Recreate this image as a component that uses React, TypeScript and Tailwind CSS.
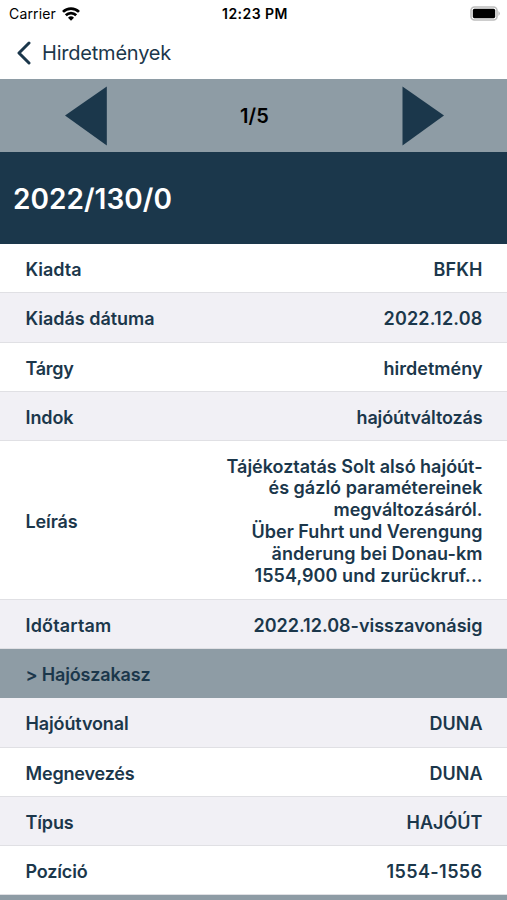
import React from "react";

type RowData = { label: string; value: string; h: string; bg: string; lw: number; vw: number };

const rows: RowData[] = [
  { label: "Kiadta", value: "BFKH", h: "h-[49px]", bg: "bg-white", lw: 56, vw: 49 },
  { label: "Kiadás dátuma", value: "2022.12.08", h: "h-[50px]", bg: "bg-[#f1f0f5]", lw: 129, vw: 99 },
  { label: "Tárgy", value: "hirdetmény", h: "h-[49px]", bg: "bg-white", lw: 48, vw: 99 },
  { label: "Indok", value: "hajóútváltozás", h: "h-[49px]", bg: "bg-[#f1f0f5]", lw: 48, vw: 126 },
];
const tail: RowData[] = [
  { label: "Hajóútvonal", value: "DUNA", h: "h-[50px]", bg: "bg-[#f1f0f5]", lw: 103, vw: 53 },
  { label: "Megnevezés", value: "DUNA", h: "h-[49px]", bg: "bg-white", lw: 109, vw: 53 },
  { label: "Típus", value: "HAJÓÚT", h: "h-[49px]", bg: "bg-[#f1f0f5]", lw: 48, vw: 76 },
  { label: "Pozíció", value: "1554-1556", h: "h-[49px]", bg: "bg-white", lw: 62, vw: 96 },
];
const description: [string, number][] = [
  ["Tájékoztatás Solt alsó hajóút-", 256],
  ["és gázló paramétereinek", 214],
  ["megváltozásáról.", 149],
  ["Über Fuhrt und Verengung", 231],
  ["änderung bei Donau-km", 211],
  ["1554,900 und zurückruf...", 228],
];

function Fit({ text, width }: { text: string; width: number }) {
  const ref = React.useRef<HTMLSpanElement>(null);
  React.useLayoutEffect(() => {
    const el = ref.current;
    if (!el) return;
    el.style.letterSpacing = "0px";
    const natural = el.getBoundingClientRect().width;
    el.style.letterSpacing = `${(width - natural) / text.length}px`;
  }, [text, width]);
  return <span ref={ref} className="inline-block whitespace-nowrap">{text}</span>;
}

function Row({ label, value, h, bg, lw, vw }: RowData) {
  return (
    <div className={`flex shrink-0 items-center justify-between border-b border-[#e0e0e4] pt-[2px] pr-[24.5px] pl-[25.5px] ${h} ${bg}`}>
      <Fit text={label} width={lw} />
      <Fit text={value} width={vw} />
    </div>
  );
}

export default function App() {
  return (
    <main className="flex h-[900px] w-[507px] flex-col overflow-hidden bg-white font-['Inter','Liberation_Sans',sans-serif] text-[18px] font-semibold text-[#1b374b]">
      <div className="grid h-[26px] shrink-0 grid-cols-3 items-center pr-[6px] pl-[9px] text-[14px] text-black">
        <div className="flex items-center gap-[6px] pt-px font-normal">
          <Fit text="Carrier" width={47} />
          <svg width="18" height="14" viewBox="0 0 18 14" fill="none" stroke="black" strokeWidth="2.7">
            <path d="M1 4.9a11.4 11.4 0 0 1 16 0M3.8 8.3a7.4 7.4 0 0 1 10.4 0" />
            <path d="m6 10.7 3 3 3-3a4.3 4.3 0 0 0-6 0Z" fill="black" stroke="none" />
          </svg>
        </div>
        <div className="pt-px text-center"><Fit text="12:23 PM" width={66} /></div>
        <svg className="justify-self-end" width="31" height="15" viewBox="0 0 31 15">
          <rect x="1" y="1" width="26" height="13" rx="3.5" fill="none" stroke="#bdbdbd" strokeWidth="1.6" />
          <rect x="2.8" y="2.8" width="22.4" height="9.4" rx="1.6" />
          <path d="M28.4 5q3 2.5 0 5Z" fill="#bdbdbd" />
        </svg>
      </div>
      <header className="flex h-[53px] shrink-0 items-center gap-[10px] pl-[16px] text-[20px] font-normal">
        <svg width="16" height="24" viewBox="0 0 16 24" fill="none" stroke="currentColor" strokeWidth="3" strokeLinecap="round" strokeLinejoin="round"><path d="M13 2 3 12l10 10" /></svg>
        <Fit text="Hirdetmények" width={129} />
      </header>
      <nav className="flex h-[73px] shrink-0 items-center justify-between bg-[#8e9ca5] pr-[63px] pl-[65px]">
        <svg width="42" height="60" viewBox="0 0 42 60"><path d="M0 29.5 41.8.5v59Z" fill="#1b374b" /></svg>
        <span className="pt-px text-[20px] text-black"><Fit text="1/5" width={29} /></span>
        <svg width="42" height="60" viewBox="0 0 42 60"><path d="M42 29.5.5.5v59Z" fill="#1b374b" /></svg>
      </nav>
      <h1 className="flex h-[92px] shrink-0 items-center bg-[#1b374b] pt-[2px] pl-[13px] text-[28px] text-white"><Fit text="2022/130/0" width={159} /></h1>
      {rows.map((r) => <Row key={r.label} {...r} />)}
      <div className="flex h-[159px] shrink-0 items-center justify-between border-b border-[#e0e0e4] pt-[2px] pr-[24.5px] pl-[25.5px]">
        <Fit text="Leírás" width={52} />
        <div className="flex flex-col items-end leading-[21.8px]">
          {description.map(([text, width]) => <Fit key={text} text={text} width={width} />)}
        </div>
      </div>
      <Row label="Időtartam" value="2022.12.08-visszavonásig" h="h-[49px]" bg="bg-[#f1f0f5]" lw={86} vw={229} />
      <div className="flex h-[49px] shrink-0 items-center bg-[#8e9ca5] pt-[2px] pl-[25.5px]"><Fit text="> Hajószakasz" width={125} /></div>
      {tail.map((r) => <Row key={r.label} {...r} />)}
      <div className="h-[5px] shrink-0 bg-[#8e9ca5]" />
    </main>
  );
}
